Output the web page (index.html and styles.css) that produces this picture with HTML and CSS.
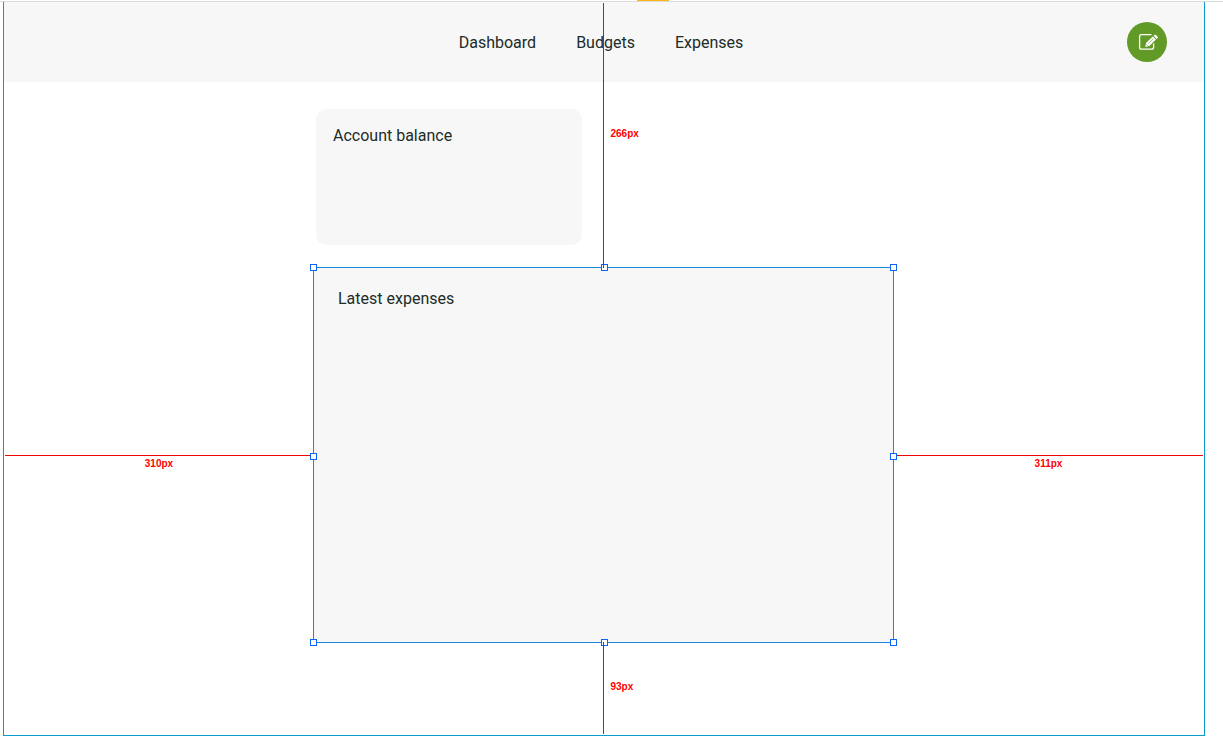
FILE: index.html
```html
<!DOCTYPE html>
<html lang="en">
<head>
<meta charset="utf-8">
<title>Dashboard</title>
<link rel="stylesheet" href="styles.css">
</head>
<body>
<div class="ruler"><span class="ruler-mark"></span></div>
<div class="artboard">
  <header class="header">
    <nav class="nav">
      <a href="#dashboard">Dashboard</a>
      <a href="#budgets">Budgets</a>
      <a href="#expenses">Expenses</a>
    </nav>
    <button class="edit" type="button" aria-label="Edit">
      <svg viewBox="0 0 24 18" width="24" height="18" aria-hidden="true">
        <path d="M16 1.600H6.500Q4.600 1.600 4.600 3.500v10.800Q4.600 16.200 6.500 16.200h10.200q1.900 0 1.900-1.900v-3.500" fill="none" stroke="#fff" stroke-width="1.300" stroke-linecap="round"/>
        <path d="M10.200 13.900l1-4.100 6.600-6.300 3.100 3.100-6.600 6.300z" fill="#fff"/>
        <path d="M18.500 2.800l.8-.8q.8-.7 1.600 0l1.700 1.600q.7.800 0 1.600l-1 .9z" fill="#fff"/>
        <path d="M13.300 10.700l4.800-4.700M11.300 11.500l1.300 1.300" fill="none" stroke="#629a28" stroke-width=".6"/>
      </svg>
    </button>
  </header>
  <main class="main">
    <section class="balance">
      <h2 class="title">Account balance</h2>
    </section>
    <div class="side side-left"><div class="measure-x"><span class="label">310px</span></div></div>
    <section class="selection">
      <h2 class="title">Latest expenses</h2>
      <span class="handle top left"></span>
      <span class="handle top center"></span>
      <span class="handle top right"></span>
      <span class="handle middle left"></span>
      <span class="handle middle right"></span>
      <span class="handle bottom left"></span>
      <span class="handle bottom center"></span>
      <span class="handle bottom right"></span>
      <div class="measure-y above"><span class="label">266px</span></div>
      <div class="measure-y below"><span class="label">93px</span></div>
    </section>
    <div class="side side-right"><div class="measure-x"><span class="label">311px</span></div></div>
  </main>
</div>
</body>
</html>
```
FILE: styles.css
```css
* {
  box-sizing: border-box;
}

body {
  margin: 0;
  min-height: 100vh;
  display: flex;
  flex-direction: column;
  background: #fff;
  color: #212b27;
  font: 16px/22px Roboto, sans-serif;
}

.ruler {
  height: 2px;
  border-bottom: 1px solid #dadcdc;
}

.ruler-mark {
  display: block;
  width: 32px;
  height: 1px;
  margin-left: 637px;
  background: #fdb515;
}

.artboard {
  flex: 1;
  display: flex;
  flex-direction: column;
  margin: 0 18px 8px 3px;
  border: solid #0a9bcb;
  border-width: 0 1px 1px;
}

.header {
  display: grid;
  grid-template-columns: 1fr auto 1fr;
  align-items: center;
  height: 80px;
  padding: 0 37px 0 31px;
  background: #f7f7f7;
}

.nav {
  grid-column: 2;
  display: flex;
  gap: 40px;
  padding-top: 2px;
}

.nav a {
  color: inherit;
  text-decoration: none;
}

.edit {
  justify-self: end;
  display: flex;
  align-items: center;
  justify-content: center;
  width: 40px;
  height: 40px;
  padding: 0;
  border: 0;
  border-radius: 50%;
  background: #629a28;
}

.main {
  flex: 1;
  display: grid;
  grid-template-columns: 309fr 581fr 310fr;
  grid-template-rows: 136px 1fr;
  row-gap: 22px;
  padding: 27px 0 92px;
}

.title {
  margin: 0;
  font-size: 16px;
  font-weight: 400;
}

.balance {
  grid-column: 2;
  width: 266px;
  margin-left: 3px;
  padding: 16px 17px;
  border-radius: 10px;
  background: #f7f7f7;
}

.selection {
  grid-column: 2;
  grid-row: 2;
  position: relative;
  padding: 20px 24px;
  border: 1px solid #1c86dc;
  background: #f7f7f7;
}

.side {
  grid-row: 2;
  display: grid;
  grid-template-rows: 1fr 1fr;
}

.side-left {
  grid-column: 1;
  padding-left: 1px;
}

.side-right {
  grid-column: 3;
  padding-right: 1px;
}

.measure-x {
  grid-row: 2;
  padding-top: 2px;
  border-top: 1px solid #f00505;
  text-align: center;
}

.label {
  display: block;
  color: #ff0000;
  font: bold 10px/12px "Liberation Sans", Arial, sans-serif;
}

.measure-y {
  position: absolute;
  left: calc(50% - 1px);
  border-left: 1px solid #f00505;
  padding-left: 7px;
}

.above {
  bottom: 100%;
  height: 265px;
  padding-top: 125px;
}

.below {
  top: 100%;
  height: 92px;
  padding-top: 39px;
}

.handle {
  position: absolute;
  width: 7px;
  height: 7px;
  border: 1px solid #0d63f3;
  background: #fff;
}

.top {
  top: -4px;
}

.middle {
  top: calc(50% - 2px);
}

.bottom {
  bottom: -4px;
}

.left {
  left: -4px;
}

.center {
  left: calc(50% - 3px);
}

.right {
  right: -4px;
}
```
